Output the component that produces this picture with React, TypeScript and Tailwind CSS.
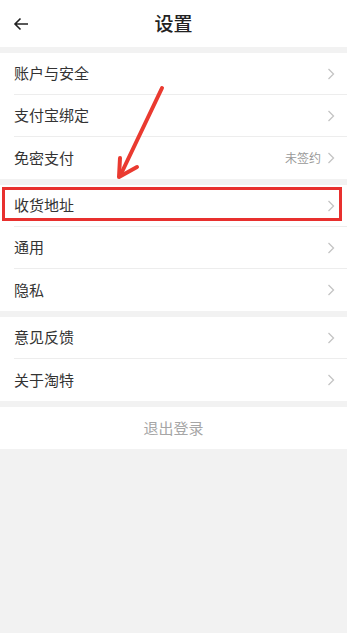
import React from 'react';

const font = { fontFamily: '"Noto Sans CJK SC", "Noto Sans", sans-serif' };

interface RowProps {
  label: string;
  value?: string;
  last?: boolean;
}

const Chevron = () => (
  <svg width="8" height="12" viewBox="0 0 8 12" className="ml-1.5">
    <path d="M1.5 1 L6.5 6 L1.5 11" fill="none" stroke="#c4c4c4" strokeWidth="1.3" />
  </svg>
);

const Row: React.FC<RowProps> = ({ label, value, last }) => (
  <div className="pl-[14px]">
    <div className={`h-[42px] flex items-center justify-between pr-[12px] ${last ? '' : 'border-b border-[#ededed]'}`}>
      <span className="text-[15px] text-[#333]">{label}</span>
      <div className="flex items-center">
        {value && <span className="text-[12px] text-[#999]">{value}</span>}
        <Chevron />
      </div>
    </div>
  </div>
);

const Group: React.FC<{ items: RowProps[] }> = ({ items }) => (
  <div className="bg-white">
    {items.map((it, i) => (
      <Row key={it.label} {...it} last={i === items.length - 1} />
    ))}
  </div>
);

export default function App() {
  return (
    <div className="relative w-[347px] h-[633px] bg-[#f2f2f2] overflow-hidden" style={font}>
      <div className="h-[47px] bg-white flex items-center relative">
        <svg width="16" height="14" viewBox="0 0 16 14" className="ml-[13px]">
          <path d="M15 7 H2 M7.5 1.5 L2 7 L7.5 12.5" fill="none" stroke="#222" strokeWidth="1.6" />
        </svg>
        <span className="absolute left-0 right-0 text-center text-[19px] font-medium text-[#222] pointer-events-none">设置</span>
      </div>

      <div className="flex flex-col gap-[6px] pt-[6px]">
        <Group items={[{ label: '账户与安全' }, { label: '支付宝绑定' }, { label: '免密支付', value: '未签约' }]} />
        <Group items={[{ label: '收货地址' }, { label: '通用' }, { label: '隐私' }]} />
        <Group items={[{ label: '意见反馈' }, { label: '关于淘特' }]} />
        <div className="bg-white h-[42px] flex items-center justify-center">
          <span className="text-[15px] text-[#a6a6a6]">退出登录</span>
        </div>
      </div>

      {/* annotation overlay */}
      <div className="absolute left-[2px] top-[187px] w-[340px] h-[34px] border-[3px] border-[#e8302e] pointer-events-none" />
      <svg className="absolute left-0 top-0 pointer-events-none" width="347" height="633">
        <g stroke="#ea3a30" strokeWidth="4" strokeLinecap="round" fill="none">
          <path d="M162 88 L121 174" />
          <path d="M120 158 L119 177 L137 167" strokeLinejoin="round" />
        </g>
      </svg>
    </div>
  );
}
